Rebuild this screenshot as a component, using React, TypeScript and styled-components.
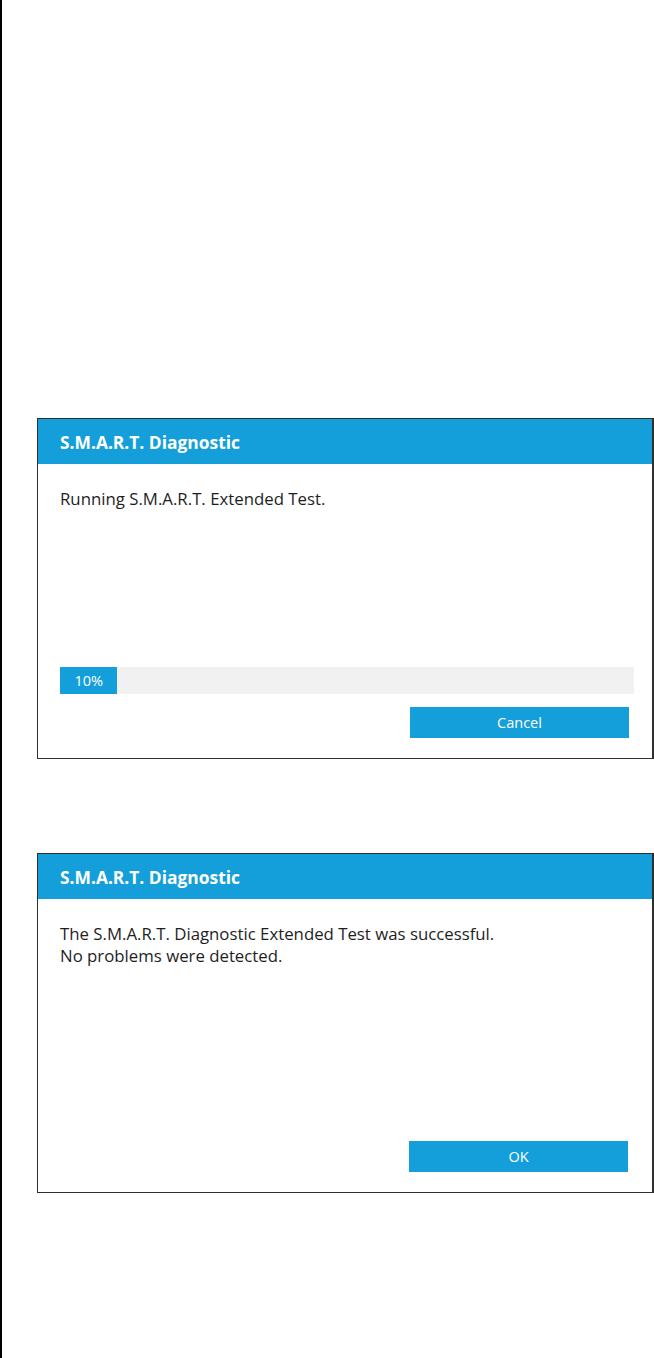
import React from 'react';
import styled, { createGlobalStyle } from 'styled-components';

const GlobalStyle = createGlobalStyle`
  html, body {
    margin: 0;
    padding: 0;
    background: #ffffff;
  }
  body {
    font-family: 'Open Sans', 'Noto Sans', sans-serif;
  }
`;

const Page = styled.div`
  box-sizing: border-box;
  height: 1358px;
  border-left: 2px solid #000;
  padding: 418px 1px 0 35px;
  display: flex;
  flex-direction: column;
  gap: 94px;
`;

const Dialog = styled.div<{ $height: number }>`
  box-sizing: border-box;
  width: 617px;
  height: ${({ $height }) => $height}px;
  border: 1px solid #2e2e2e;
  border-right-width: 2px;
  background: #fff;
  display: flex;
  flex-direction: column;
`;

const Header = styled.div`
  height: 45px;
  background: #159fda;
  color: #fff;
  font-weight: 700;
  font-size: 17.4px;
  display: flex;
  align-items: center;
  padding-left: 22px;
  flex-shrink: 0;
`;

const Body = styled.div`
  flex: 1;
  display: flex;
  flex-direction: column;
  padding: 24px 18px 20px 22px;
`;

const Message = styled.div`
  color: #1e1e1e;
  font-size: 16.8px;
  line-height: 22px;
  flex: 1;
`;

const Track = styled.div`
  height: 27px;
  background: #f1f1f1;
  display: flex;
  margin-bottom: 13px;
`;

const Fill = styled.div`
  background: #159fda;
  color: #fff;
  font-size: 14.5px;
  display: flex;
  align-items: center;
  justify-content: center;
`;

const Footer = styled.div<{ $inset: number }>`
  display: flex;
  justify-content: flex-end;
  padding-right: ${({ $inset }) => $inset}px;
`;

const Button = styled.button`
  width: 219px;
  height: 31px;
  border: none;
  background: #159fda;
  color: #fff;
  font-family: inherit;
  font-size: 14.5px;
  cursor: pointer;
  padding: 0;
`;

export default function App() {
  const progress = 10;
  return (
    <>
      <GlobalStyle />
      <Page>
        <Dialog $height={341}>
          <Header>S.M.A.R.T. Diagnostic</Header>
          <Body>
            <Message>Running S.M.A.R.T. Extended Test.</Message>
            <Track>
              <Fill style={{ width: `${progress}%` }}>{progress}%</Fill>
            </Track>
            <Footer $inset={5}>
              <Button>Cancel</Button>
            </Footer>
          </Body>
        </Dialog>
        <Dialog $height={340}>
          <Header>S.M.A.R.T. Diagnostic</Header>
          <Body>
            <Message>
              The S.M.A.R.T. Diagnostic Extended Test was successful.
              <br />
              No problems were detected.
            </Message>
            <Footer $inset={6}>
              <Button>OK</Button>
            </Footer>
          </Body>
        </Dialog>
      </Page>
    </>
  );
}
